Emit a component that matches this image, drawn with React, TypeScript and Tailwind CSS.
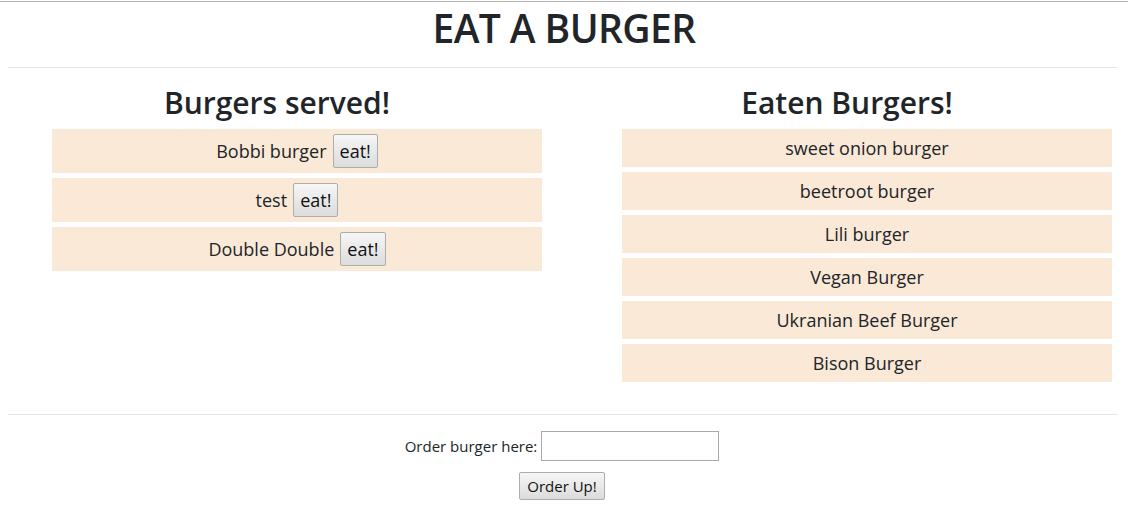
import React from "react";

const served = ["Bobbi burger", "test", "Double Double"];
const eaten = [
  "sweet onion burger",
  "beetroot burger",
  "Lili burger",
  "Vegan Burger",
  "Ukranian Beef Burger",
  "Bison Burger",
];

const font = { fontFamily: '"Open Sans", "Noto Sans", Arial, sans-serif' };

const btn =
  "border border-[#adadad] rounded-[2px] bg-gradient-to-b from-[#f6f6f6] to-[#dcdcdc] text-[#111] leading-tight";

export default function App() {
  return (
    <div
      className="w-[1128px] bg-white text-[#212529] border-t border-[#b5b5b5] mt-px"
      style={font}
    >
      <h1 className="text-center text-[39px] font-semibold leading-[48px] mt-[2px] mb-[15px] tracking-[-0.6px]">
        EAT A BURGER
      </h1>
      <hr className="mx-2 border-[#e6e6e6] w-[1109px]" />

      <div className="flex gap-10 pl-3 mt-[15px]">
        <div className="w-[530px]">
          <h2 className="text-center text-[30px] font-semibold leading-[40px] mb-[6px]">
            Burgers served!
          </h2>
          <ul className="pl-10 flex flex-col gap-[5px]">
            {served.map((name) => (
              <li
                key={name}
                className="bg-[#fae9d7] h-[44px] flex items-center justify-center gap-[6px] text-[18px]"
              >
                <span>{name}</span>
                <button className={`${btn} h-[34px] px-[6px] text-[18px]`}>
                  eat!
                </button>
              </li>
            ))}
          </ul>
        </div>
        <div className="w-[530px]">
          <h2 className="text-center text-[30px] font-semibold leading-[40px] mb-[6px]">
            Eaten Burgers!
          </h2>
          <ul className="pl-10 flex flex-col gap-[5px]">
            {eaten.map((name) => (
              <li
                key={name}
                className="bg-[#fae9d7] h-[38px] flex items-center justify-center text-[18px]"
              >
                {name}
              </li>
            ))}
          </ul>
        </div>
      </div>

      <hr className="mx-2 border-[#e6e6e6] w-[1109px] mt-[32px]" />

      <div className="flex flex-col items-center pt-4">
        <div className="flex items-center gap-1 text-[15px] -ml-1">
          <label>Order burger here:</label>
          <input
            type="text"
            className="w-[178px] h-[30px] border border-[#a9a9a9] outline-none px-1"
          />
        </div>
        <button className={`${btn} mt-[11px] h-[28px] px-[7px] text-[15px] -ml-1`}>
          Order Up!
        </button>
      </div>
    </div>
  );
}
